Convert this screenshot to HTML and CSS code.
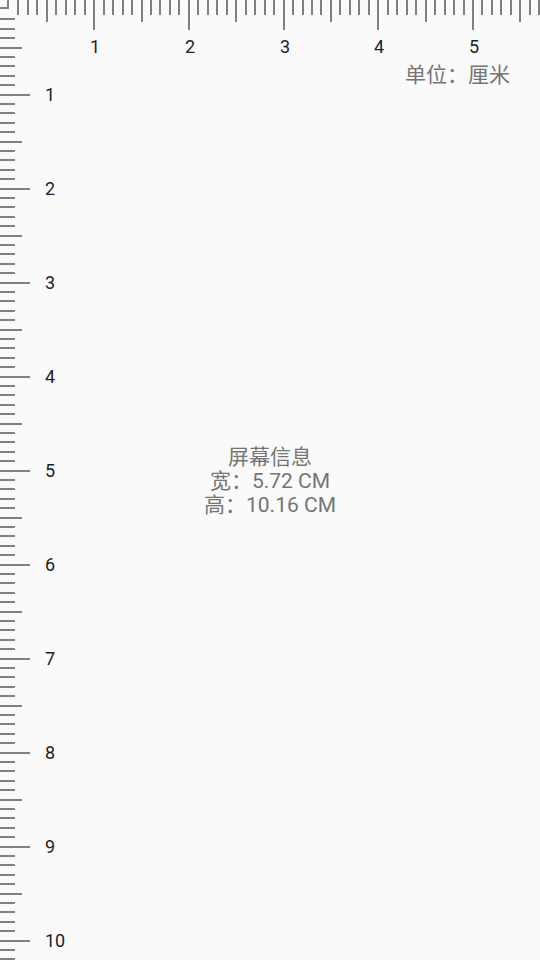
FILE: index.html
```html
<!DOCTYPE html>
<html lang="zh-CN">
<head>
<meta charset="utf-8">
<title>尺子</title>
<link rel="stylesheet" href="styles.css">
</head>
<body>
<div class="screen">
  <svg class="ruler" width="540" height="960" viewBox="0 0 540 960">
    <g class="ticks">
      <path d="M8 0v9M0 8h9"/>
      <path d="M18 0v15M28 0v15M37 0v15M56 0v15M66 0v15M75 0v15M85 0v15M104 0v15M113 0v15M123 0v15M132 0v15M151 0v15M160 0v15M170 0v15M179 0v15M198 0v15M208 0v15M217 0v15M227 0v15M246 0v15M255 0v15M265 0v15M274 0v15M293 0v15M303 0v15M312 0v15M321 0v15M340 0v15M350 0v15M359 0v15M369 0v15M388 0v15M397 0v15M407 0v15M416 0v15M435 0v15M445 0v15M454 0v15M464 0v15M482 0v15M492 0v15M501 0v15M511 0v15M530 0v15M539 0v15"/>
      <path d="M47 0v22M142 0v22M236 0v22M331 0v22M426 0v22M520 0v22"/>
      <path d="M94 0v30M189 0v30M284 0v30M378 0v30M473 0v30"/>
      <path d="M0 19h15M0 29h15M0 38h15M0 57h15M0 66h15M0 76h15M0 85h15M0 104h15M0 113h15M0 123h15M0 132h15M0 151h15M0 160h15M0 170h15M0 179h15M0 198h15M0 207h15M0 217h15M0 226h15M0 245h15M0 254h15M0 264h15M0 273h15M0 292h15M0 301h15M0 311h15M0 320h15M0 339h15M0 348h15M0 358h15M0 367h15M0 386h15M0 395h15M0 405h15M0 414h15M0 433h15M0 442h15M0 452h15M0 461h15M0 480h15M0 489h15M0 499h15M0 508h15M0 527h15M0 536h15M0 546h15M0 555h15M0 574h15M0 583h15M0 593h15M0 602h15M0 621h15M0 630h15M0 640h15M0 649h15M0 668h15M0 677h15M0 687h15M0 696h15M0 715h15M0 724h15M0 734h15M0 743h15M0 762h15M0 771h15M0 781h15M0 790h15M0 809h15M0 818h15M0 828h15M0 837h15M0 856h15M0 865h15M0 875h15M0 884h15M0 903h15M0 912h15M0 922h15M0 931h15M0 950h15M0 959h15"/>
      <path d="M0 48h22M0 142h22M0 236h22M0 330h22M0 424h22M0 518h22M0 612h22M0 706h22M0 800h22M0 894h22"/>
      <path d="M0 95h30M0 189h30M0 283h30M0 377h30M0 471h30M0 565h30M0 659h30M0 753h30M0 847h30M0 941h30"/>
    </g>
    <g class="top-labels">
      <text x="95" y="53">1</text>
      <text x="190" y="53">2</text>
      <text x="285" y="53">3</text>
      <text x="379" y="53">4</text>
      <text x="474" y="53">5</text>
    </g>
    <g class="left-labels">
      <text x="45" y="101">1</text>
      <text x="45" y="195">2</text>
      <text x="45" y="289">3</text>
      <text x="45" y="383">4</text>
      <text x="45" y="477">5</text>
      <text x="45" y="571">6</text>
      <text x="45" y="665">7</text>
      <text x="45" y="759">8</text>
      <text x="45" y="853">9</text>
      <text x="45" y="947">10</text>
    </g>
  </svg>
  <div class="unit">单位：厘米</div>
  <div class="info">
    <div class="info-line">屏幕信息</div>
    <div class="info-line">宽：5.72 CM</div>
    <div class="info-line">高：10.16 CM</div>
  </div>
</div>
</body>
</html>
```
FILE: styles.css
```css
html, body {
  margin: 0;
  padding: 0;
  background: #fafafa;
}

.screen {
  position: relative;
  width: 540px;
  height: 960px;
  overflow: hidden;
  display: grid;
  grid-template-columns: 1fr;
  grid-template-rows: 1fr;
  background: #fafafa;
  font-family: Roboto, "Noto Sans CJK SC", sans-serif;
}

.ruler {
  position: absolute;
  left: 0;
  top: 0;
  display: block;
}

.ticks path {
  fill: none;
  stroke: #808080;
  stroke-width: 2;
  shape-rendering: crispEdges;
}

.top-labels text,
.left-labels text {
  font-family: Roboto, sans-serif;
  font-size: 18px;
  fill: #222222;
}

.top-labels text {
  text-anchor: middle;
}

.unit {
  grid-area: 1 / 1;
  align-self: start;
  justify-self: end;
  margin-top: 63px;
  margin-right: 30px;
  font-size: 21px;
  line-height: 24px;
  color: #757575;
  position: relative;
}

.info {
  grid-area: 1 / 1;
  align-self: center;
  justify-self: center;
  padding-top: 2px;
  display: flex;
  flex-direction: column;
  align-items: center;
  font-size: 21px;
  line-height: 24px;
  color: #757575;
  position: relative;
}
```
